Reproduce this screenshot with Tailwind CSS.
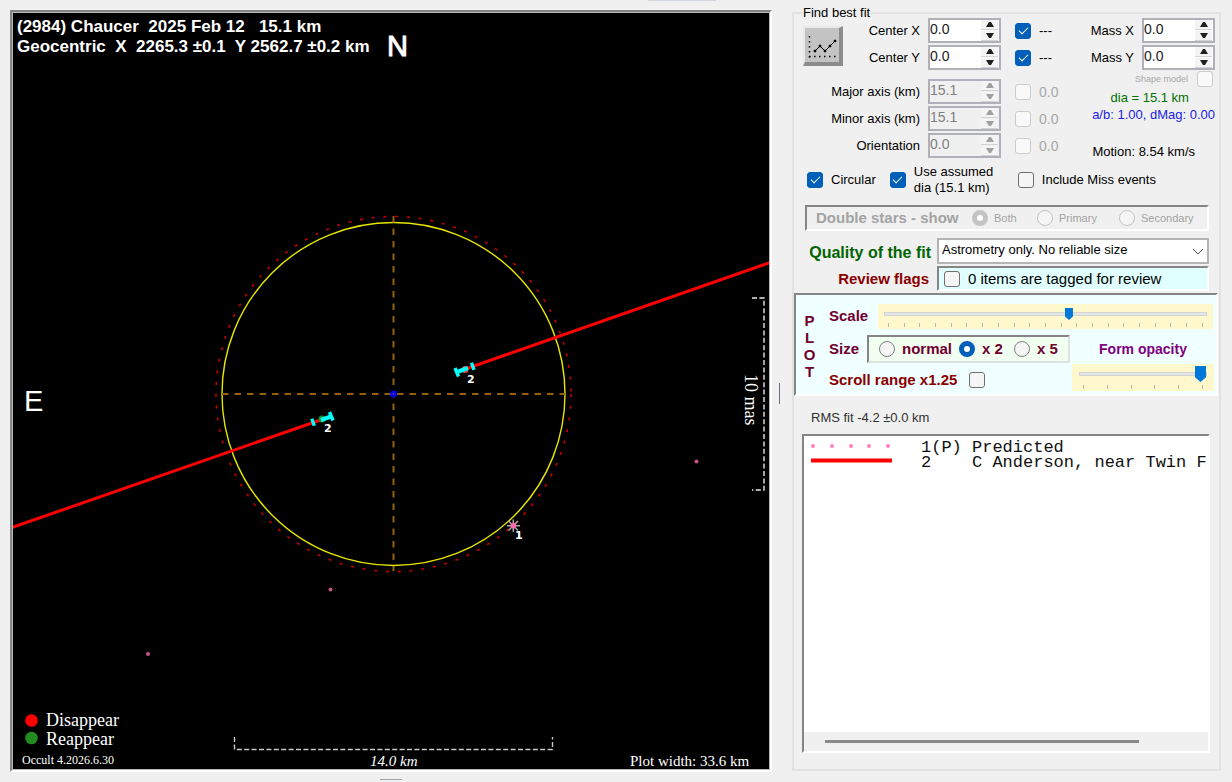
<!DOCTYPE html>
<html lang="en">
<head>
    <meta charset="UTF-8" />
    <meta name="viewport" content="width=device-width, initial-scale=1.0">
    <script src="https://cdn.jsdelivr.net/npm/@tailwindcss/browser@4"></script>
    <title>Occult - (2984) Chaucer</title>
</head>
<body class="bg-[#f0f0f0] font-['Liberation_Sans',Arial,sans-serif] text-[13px] leading-4 text-black">
<div class="flex items-start pl-[10px] pr-[11px] pt-[6px] relative">
    <div class="absolute top-0 left-[648px] w-[68px] h-px bg-gray-300"></div>

    <!-- Plot -->
    <div class="flex-1 min-w-0 mt-1">
        <div class="border-2 border-t-[#858585] border-l-[#858585] border-r-white border-b-white">
            <svg viewBox="13 13 756 756" class="block w-full h-auto bg-black border border-[#b8b8b8]" fill="none">
                <!-- predicted outline, fitted outline, axes -->
                <circle cx="393.5" cy="394" r="177.5" stroke="#c80000" stroke-width="1.6" stroke-dasharray="3 8.8" />
                <circle cx="393.5" cy="394" r="171.5" stroke="#e6e600" stroke-width="1.4" />
                <path d="M222 394H565" stroke="#94610a" stroke-width="2" stroke-dasharray="6.5 6" />
                <path d="M393.5 216V571" stroke="#94610a" stroke-width="2" stroke-dasharray="6.5 6" />
                <circle cx="393.5" cy="394" r="3.6" fill="#0000e6" />
                <circle cx="393.5" cy="394" r="1" fill="#5a4a80" />

                <!-- chord 2 -->
                <path d="M12 527.5L322 419.5M464 369.5L770 262.5" stroke="#ff0000" stroke-width="3" />
                <circle cx="322" cy="419" r="3.5" fill="#228b22" />
                <circle cx="465" cy="369.5" r="3.5" fill="#e04040" />
                <path d="M321 420L331 416.5M457 372L468 368" stroke="#00ffff" stroke-width="4" />
                <path d="M311.8 418.8L314.3 425.8M329.5 412L333 420.5M455 368L458.5 376.5M471.5 362.7L474 369.9" stroke="#00ffff" stroke-width="3.4" />

                <!-- event 1 -->
                <path d="M507 525.8H520M513.3 519.5V532M508.5 521L518 530.5M518 521L508.5 530.5" stroke="#a8a8a8" stroke-width="1.5" />
                <circle cx="513.3" cy="525.8" r="2.8" fill="#ff69b4" />
                <g fill="#c45486">
                    <circle cx="696.5" cy="461.5" r="2" />
                    <circle cx="330.5" cy="589.5" r="2" />
                    <circle cx="148" cy="654" r="2" />
                </g>
                <g fill="#ffffff" class="font-['DejaVu_Sans',sans-serif] text-[11px] font-bold">
                    <text x="467" y="383">2</text>
                    <text x="324" y="432">2</text>
                    <text x="515" y="539">1</text>
                </g>

                <!-- scale brackets -->
                <path d="M234.5 737V749.5H552.5V737" stroke="#c8c8c8" stroke-width="1.4" stroke-dasharray="5 2.4" />
                <path d="M752 298H764V490H752" stroke="#e8e8e8" stroke-width="1.4" stroke-dasharray="5 2.4" />

                <circle cx="31.5" cy="720.5" r="6.3" fill="#ff0000" />
                <circle cx="31.5" cy="738" r="6.3" fill="#228b22" />

                <g fill="#ffffff" class="font-['Liberation_Sans',Arial,sans-serif] text-[17px] font-bold">
                    <text x="17" y="32" class="whitespace-pre">(2984) Chaucer  2025 Feb 12   15.1 km</text>
                    <text x="17" y="52" class="whitespace-pre">Geocentric  X  2265.3 ±0.1  Y 2562.7 ±0.2 km</text>
                </g>
                <g fill="#ffffff" stroke="#ffffff" class="font-['Liberation_Sans',Arial,sans-serif] text-[29px]">
                    <text x="387" y="56">N</text>
                    <text x="24" y="411" stroke="none">E</text>
                </g>
                <g fill="#ffffff" class="font-['Liberation_Serif',serif]">
                    <text x="46" y="726" class="text-[18px]">Disappear</text>
                    <text x="46" y="745" class="text-[18px]">Reappear</text>
                    <text x="22" y="764" class="text-[12px]">Occult 4.2026.6.30</text>
                    <text x="370" y="766" class="text-[15px] italic">14.0 km</text>
                    <text x="630" y="766" class="text-[15px]">Plot width: 33.6 km</text>
                    <text transform="translate(745 374) rotate(90)" class="text-[18px]">10 mas</text>
                </g>
            </svg>
        </div>
        <div class="mx-auto mt-[7px] w-[22px] h-px bg-gray-400"></div>
    </div>

    <div class="self-center w-px h-[21px] mx-[7px] bg-gray-500"></div>

    <!-- Fit controls -->
    <fieldset class="ml-[5px] w-[429px] shrink-0 self-stretch mb-[9px] border-2 border-[#e2e2e2] flex flex-col min-w-0">
        <legend class="ml-2 px-[1px] leading-[14px]">Find best fit</legend>

        <div class="flex -mt-[3px]">
            <div class="w-[207px]">
                <div class="flex justify-between">
                    <button type="button" aria-label="Plot fit" class="ml-[9px] mt-[9px] size-10 bg-[#c3c3c3] border-t-2 border-l-2 border-b-4 border-r-4 border-t-[#e8e8e8] border-l-[#e8e8e8] border-b-[#8c8c8c] border-r-[#8c8c8c]">
                        <svg viewBox="0 0 34 34" class="size-[34px]" fill="none" stroke="#000">
                            <path d="M4.5 8V30" stroke-width="1.5" stroke-dasharray="1.5 3.5" />
                            <path d="M4 28.5H32" stroke-width="1.5" stroke-dasharray="1.5 3.5" />
                            <path d="M10 23L15 18L20 23L30 13" />
                            <path d="M9 22h2v2h-2zM14 17h2v2h-2zM19 22h2v2h-2zM24 17h2v2h-2zM29 12h2v2h-2z" fill="#000" stroke-width=".5" />
                        </svg>
                    </button>
                    <div>
                        <div class="h-[27px] flex items-center justify-end gap-2"><label for="cx">Center X</label><div data-spin="cx" data-value="0.0"></div></div>
                        <div class="h-[27px] flex items-center justify-end gap-2"><label for="cy">Center Y</label><div data-spin="cy" data-value="0.0"></div></div>
                    </div>
                </div>
                <div class="mt-[7px]">
                    <div class="h-[27px] flex items-center justify-end gap-2"><label for="major">Major axis (km)</label><div data-spin="major" data-value="15.1" data-off></div></div>
                    <div class="h-[27px] flex items-center justify-end gap-2"><label for="minor">Minor axis (km)</label><div data-spin="minor" data-value="15.1" data-off></div></div>
                    <div class="h-[27px] flex items-center justify-end gap-2"><label for="orient">Orientation</label><div data-spin="orient" data-value="0.0" data-off></div></div>
                </div>
            </div>

            <div class="ml-[14px]">
                <label class="h-[27px] flex items-center gap-2"><input type="checkbox" checked>---</label>
                <label class="h-[27px] flex items-center gap-2"><input type="checkbox" checked>---</label>
                <label class="mt-[7px] h-[27px] flex items-center gap-2 text-[14px] text-[#a8a8a8]"><input type="checkbox" disabled>0.0</label>
                <label class="h-[27px] flex items-center gap-2 text-[14px] text-[#a8a8a8]"><input type="checkbox" disabled>0.0</label>
                <label class="h-[27px] flex items-center gap-2 text-[14px] text-[#a8a8a8]"><input type="checkbox" disabled>0.0</label>
            </div>

            <div class="flex-1 pr-1">
                <div class="h-[27px] flex items-center justify-end gap-2"><label for="mx">Mass X</label><div data-spin="mx" data-value="0.0"></div></div>
                <div class="h-[27px] flex items-center justify-end gap-2"><label for="my">Mass Y</label><div data-spin="my" data-value="0.0"></div></div>
                <label class="flex items-center justify-end gap-[9px] h-4 pr-[2px] text-[9px] text-[#a8a8a8]">Shape model<input type="checkbox" disabled></label>
                <div class="text-center pl-[26px] mt-[2px] leading-[17px] text-[#007000]">dia = 15.1 km</div>
                <div class="text-right leading-[17px] text-[#2020e8]">a/b: 1.00, dMag: 0.00</div>
                <div class="mt-[21px] text-right pr-5">Motion: 8.54 km/s</div>
            </div>
        </div>

        <div class="flex items-center h-[34px] mt-[3px] mb-[2px] pl-[13px]">
            <label class="flex items-center gap-2"><input type="checkbox" checked>Circular</label>
            <label class="flex items-center gap-2 ml-[14px] w-[112px]"><input type="checkbox" checked><span>Use assumed<br>dia (15.1 km)</span></label>
            <label class="flex items-center gap-2 ml-4"><input type="checkbox">Include Miss events</label>
        </div>

        <div class="ml-[11px] mr-[10px] mt-[6px] h-[26px] flex items-center pl-[9px] border-2 border-t-[#858585] border-l-[#858585] border-r-white border-b-white text-[#a3a3a3]">
            <span class="w-[156px] text-[15px] font-bold">Double stars - show</span>
            <label class="flex items-center gap-[6px] text-[11px] w-[65px]"><input type="radio" name="star" checked disabled>Both</label>
            <label class="flex items-center gap-[6px] text-[11px] w-[82px]"><input type="radio" name="star" disabled>Primary</label>
            <label class="flex items-center gap-[6px] text-[11px]"><input type="radio" name="star" disabled>Secondary</label>
        </div>

        <div class="flex items-center mt-[7px] mr-[10px]">
            <label for="quality" class="w-[137px] text-right text-[16px] font-bold text-[#006400] whitespace-nowrap pt-1">Quality of the fit</label>
            <div class="relative flex-1 ml-[6px]">
                <select id="quality" class="appearance-none block w-full h-[26px] pl-[3px] pb-[2px] bg-white border-2 border-[#b4b4b4] text-[13px]">
                    <option>Astrometry only. No reliable size</option>
                </select>
                <svg viewBox="0 0 12 8" class="absolute right-[5px] top-[10px] w-3 h-2 pointer-events-none" fill="none" stroke="#505050"><path d="M1 1L6 6L11 1" /></svg>
            </div>
        </div>
        <div class="flex items-center mt-[2px] mr-[10px]">
            <span class="w-[135px] text-right text-[15px] font-bold text-[#8b0000]">Review flags</span>
            <label class="ml-2 flex-1 h-[25px] flex items-center gap-2 pl-[5px] bg-[#e0ffff] border-2 border-t-[#858585] border-l-[#858585] border-r-white border-b-white text-[15px]"><input type="checkbox">0 items are tagged for review</label>
        </div>

        <!-- Plot settings -->
        <div class="mt-[2px] mr-[1px] h-[103px] flex bg-[#f0ffff] border-2 border-t-[#858585] border-l-[#858585] border-r-white border-b-white font-bold text-[15px] text-[#70002e]">
            <div class="w-[27px] pt-[17px] text-center leading-[17px]">P<br>L<br>O<br>T</div>
            <div class="flex-1 min-w-0 pl-[6px]">
                <div class="flex pt-[9px]">
                    <label for="scale" class="w-[49px] leading-6">Scale</label>
                    <div class="flex-1 mr-[3px] h-[25px] bg-[#fff8cc] px-[6px] pt-[3px]">
                        <input id="scale" type="range" min="0" max="20" step="0.1" value="11.5" class="block w-full h-[14px]">
                        <div data-ticks="21" class="flex justify-between px-1 mt-[2px]"></div>
                    </div>
                </div>
                <div class="flex">
                    <div class="w-[241px]">
                        <div class="flex items-center mt-[6px]">
                            <span class="w-[38px]">Size</span>
                            <div class="w-[203px] h-7 flex items-center pl-[10px] bg-[#f0fff0] border-2 border-t-[#858585] border-l-[#858585] border-r-[#e0e0e0] border-b-[#e0e0e0]">
                                <label class="flex items-center gap-[7px] w-[80px]"><input type="radio" name="size">normal</label>
                                <label class="flex items-center gap-[7px] w-[55px]"><input type="radio" name="size" checked>x 2</label>
                                <label class="flex items-center gap-[7px]"><input type="radio" name="size">x 5</label>
                            </div>
                        </div>
                        <label class="flex items-center gap-3 mt-[9px] text-[#8b0000]">Scroll range x1.25<input type="checkbox"></label>
                    </div>
                    <div class="flex-1 pl-[2px] pr-[2px] pt-3">
                        <label for="opacity" class="block text-center text-[14px] text-[#800080]">Form opacity</label>
                        <div class="mt-[7px] h-[27px] bg-[#fff8cc] px-[7px] pt-[2px]">
                            <input id="opacity" type="range" min="0" max="5" value="5" class="block w-full h-4">
                            <div data-ticks="6" class="flex justify-between px-1 mt-[3px]"></div>
                        </div>
                    </div>
                </div>
            </div>
        </div>

        <div class="mt-[14px] ml-[17px] text-[#303030]">RMS fit -4.2 ±0.0 km</div>

        <!-- Chord list -->
        <div class="mt-[8px] ml-2 mr-[9px] mb-4 flex-1 flex flex-col bg-white border-2 border-t-[#858585] border-l-[#858585] border-r-white border-b-white overflow-hidden">
            <div class="flex-1 flex pt-1 pl-[6px]">
                <svg viewBox="0 0 111 30" class="w-[111px] h-[30px] shrink-0">
                    <g fill="#ff80c0"><circle cx="3" cy="6" r="2" /><circle cx="22" cy="6" r="2" /><circle cx="41" cy="6" r="2" /><circle cx="59" cy="6" r="2" /><circle cx="78" cy="6" r="2" /></g>
                    <path d="M1 20.5H82" stroke="#ff0000" stroke-width="4" />
                </svg>
                <pre class="font-['Liberation_Mono',monospace] text-[17px] leading-[15px] text-[#101010]">1(P) Predicted
2    C Anderson, near Twin F</pre>
            </div>
            <div class="h-[19px] bg-[#f0f0f0] pl-[21px] pr-[69px] pt-2"><div class="h-[3px] bg-[#8a8a8a]"></div></div>
        </div>
    </fieldset>
</div>

<template id="spin">
    <div class="flex w-[73px] h-[25px] border-2 border-[#b0b0b8] bg-white has-disabled:bg-[#f0f0f0]">
        <input type="text" class="w-0 flex-1 pb-[3px] text-[14px] text-[#202020] disabled:text-[#808080]">
        <div class="w-[17px] mr-[1px] flex flex-col gap-px">
            <button type="button" aria-label="Up" class="flex-1 bg-[#f4f4f4] border-b border-[#d4d4d4] flex items-center justify-center text-[#202020] disabled:text-[#a0a0a0]"><svg viewBox="0 0 8 5" class="w-2 h-[5px]" fill="currentColor"><path d="M0 5L3 0H5L8 5z" /></svg></button>
            <button type="button" aria-label="Down" class="flex-1 bg-[#f4f4f4] border-b border-[#d4d4d4] flex items-center justify-center text-[#202020] disabled:text-[#a0a0a0]"><svg viewBox="0 0 8 5" class="w-2 h-[5px]" fill="currentColor"><path d="M0 0L3 5H5L8 0z" /></svg></button>
        </div>
    </div>
</template>

<script>
    // Number boxes
    document.querySelectorAll('[data-spin]').forEach(function(box) {
        const clone = document.querySelector('#spin').content.cloneNode(true);
        const input = clone.querySelector('input');
        input.id = box.dataset.spin;
        input.value = box.dataset.value;
        if ('off' in box.dataset) {
            clone.querySelectorAll('input, button').forEach(function(el) { el.disabled = true; });
        }
        box.appendChild(clone);
    });

    // Slider tick marks
    document.querySelectorAll('[data-ticks]').forEach(function(row) {
        for (let i = 0; i < Number(row.dataset.ticks); i++) {
            const tick = document.createElement('span');
            tick.className = 'w-px h-1 bg-[#b8b8b0]';
            row.appendChild(tick);
        }
    });

    // Shared looks for the form controls
    const looks = {
        checkbox: "appearance-none shrink-0 size-4 rounded-[3px] border border-[#707070] bg-[#f5f5f5] flex justify-center disabled:border-[#cccccc] disabled:bg-[#f9f9f9] checked:bg-[#005fb8] checked:border-[#005fb8] checked:after:content-[''] checked:after:w-[5px] checked:after:h-[9px] checked:after:mt-[1px] checked:after:border-r checked:after:border-b checked:after:border-white checked:after:rotate-45",
        radio: "appearance-none shrink-0 size-4 rounded-full border border-[#808080] bg-[#f5f5f5] checked:bg-white checked:border-[5px] checked:border-[#005fb8] disabled:border-[#c4c4c4]",
        range: "appearance-none bg-transparent [&::-webkit-slider-runnable-track]:h-1 [&::-webkit-slider-runnable-track]:bg-[#e4e6e6] [&::-webkit-slider-runnable-track]:border [&::-webkit-slider-runnable-track]:border-[#d4d6d6] [&::-webkit-slider-thumb]:appearance-none [&::-webkit-slider-thumb]:bg-[#0078d7] [&::-webkit-slider-thumb]:[clip-path:polygon(0_0,100%_0,100%_70%,50%_100%,0_70%)]"
    };
    document.querySelectorAll('input').forEach(function(el) {
        if (looks[el.type]) {
            el.className = looks[el.type] + ' ' + el.className;
        }
    });
    document.querySelector('#scale').classList.add('[&::-webkit-slider-thumb]:w-2', '[&::-webkit-slider-thumb]:h-3', '[&::-webkit-slider-thumb]:-mt-[5px]');
    document.querySelector('#opacity').classList.add('[&::-webkit-slider-thumb]:w-[11px]', '[&::-webkit-slider-thumb]:h-4', '[&::-webkit-slider-thumb]:-mt-[7px]');
</script>
</body>
</html>
